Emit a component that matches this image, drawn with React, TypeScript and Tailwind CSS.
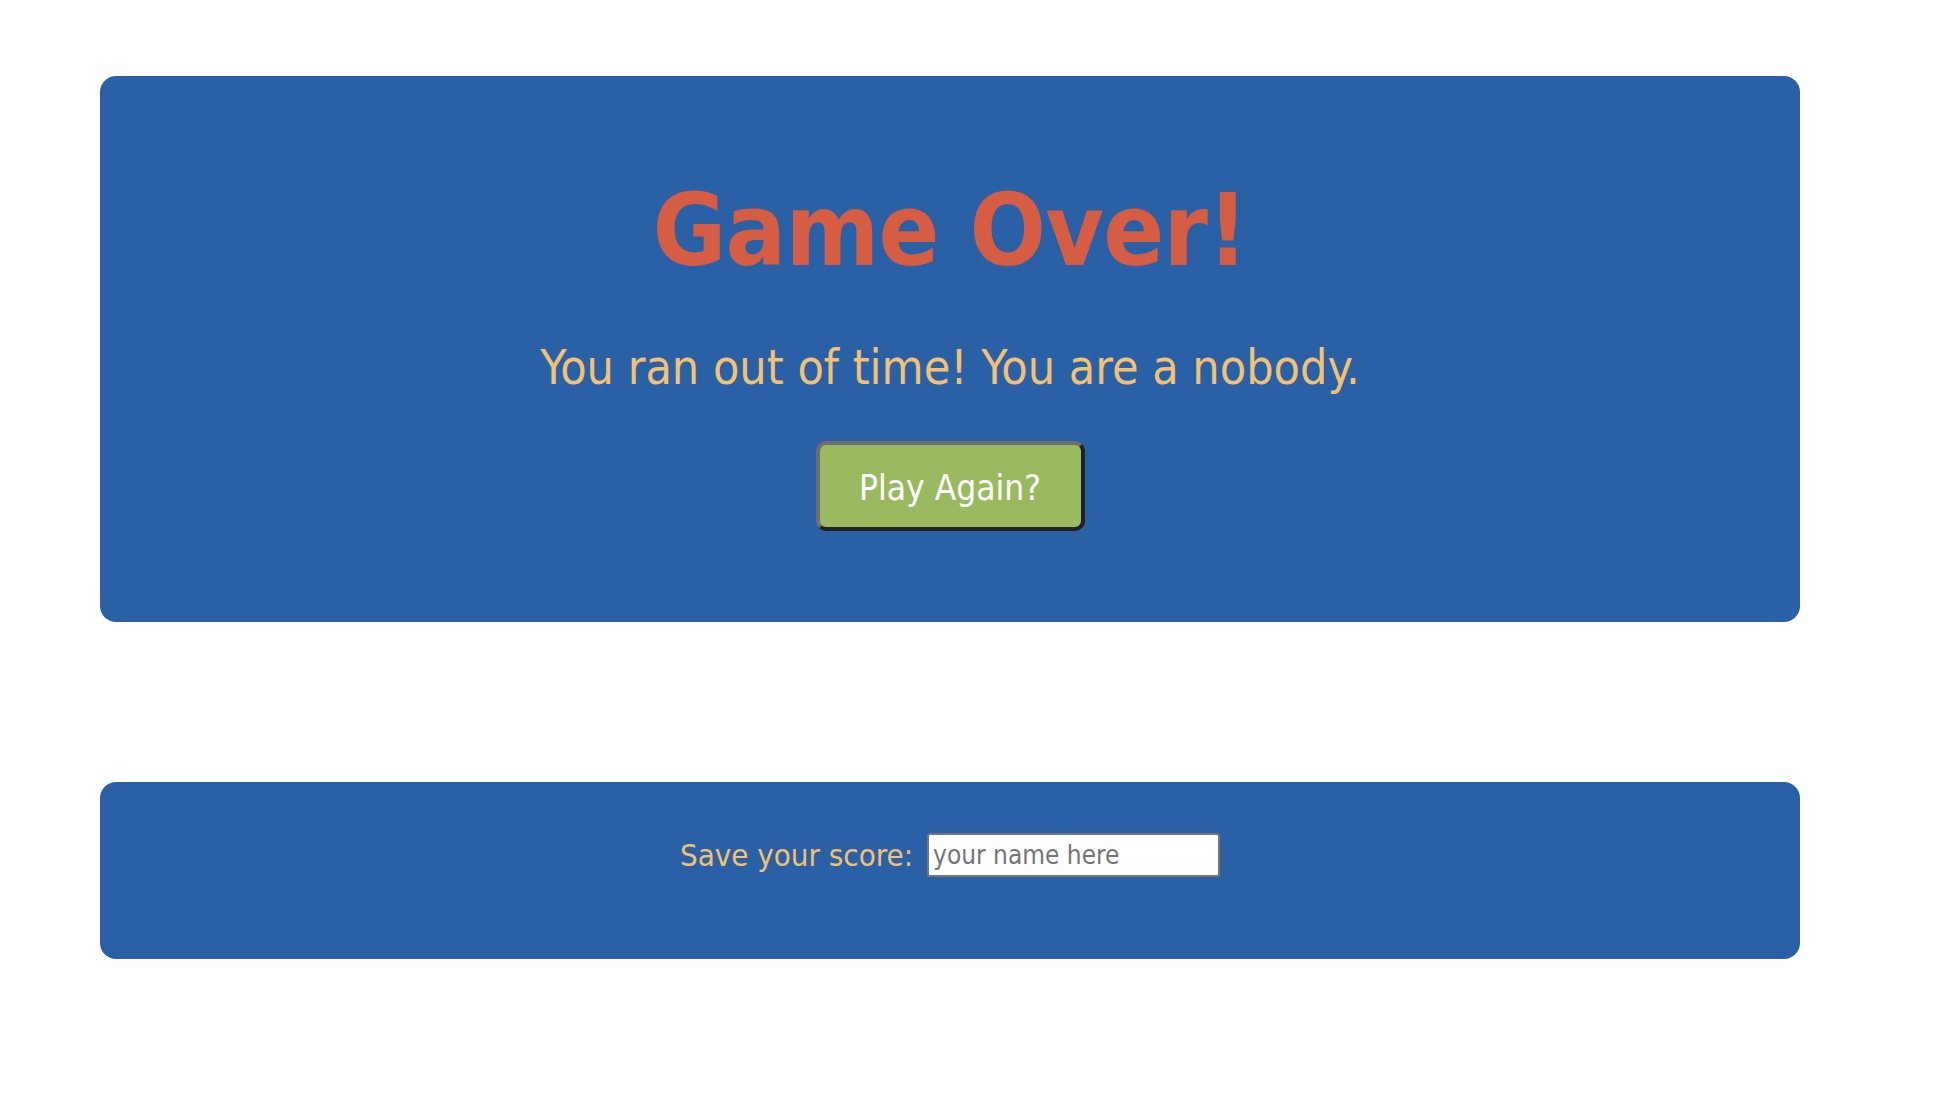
import React from "react";

export default function App() {
  return (
    <div className="min-h-[1106px] w-full bg-white font-['DejaVu_Sans_Condensed','DejaVu_Sans',sans-serif]">
      <div className="flex flex-col pl-[100px] pt-[76px]">
        <section className="flex w-[1700px] h-[546px] flex-col items-center rounded-2xl bg-[#2a60a6] pt-[105px]">
          <h1 className="text-[100px] font-bold leading-none tracking-[-0.7px] text-[#d45d44]">Game Over!</h1>
          <p className="mt-[62px] text-[48px] leading-none text-[#f2c174]">
            You ran out of time! You are a nobody.
          </p>
          <button className="mt-[50px] flex h-[90px] w-[269px] items-center justify-center rounded-[10px] border-4 border-solid border-t-[#6e6e6e] border-l-[#6e6e6e] border-r-[#222222] border-b-[#222222] bg-[#9aba5f] pt-[4px] text-[35px] leading-none text-white">
            Play Again?
          </button>
        </section>
        <section className="mt-[160px] flex h-[177px] w-[1700px] items-start justify-center rounded-2xl bg-[#2a60a6] pt-[51px]">
          <div className="flex items-center gap-[14px]">
            <label className="text-[31px] leading-none text-[#f2c174]">Save your score:</label>
            <input
              type="text"
              placeholder="your name here"
              className="h-[44px] w-[293px] rounded-[3px] border-2 border-[#767676] bg-white px-[4px] text-[26px] text-black placeholder:text-[#757575] outline-none"
            />
          </div>
        </section>
      </div>
    </div>
  );
}
